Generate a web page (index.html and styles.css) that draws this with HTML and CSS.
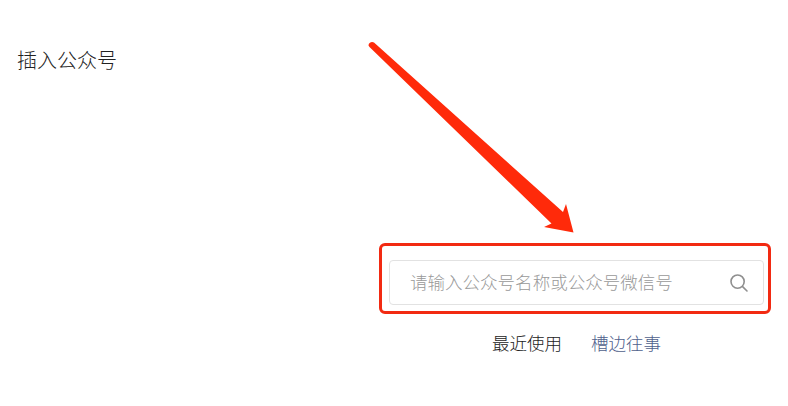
FILE: index.html
```html
<!DOCTYPE html>
<html lang="zh-CN">
<head>
    <meta charset="UTF-8">
    <meta name="viewport" content="width=device-width, initial-scale=1.0">
    <title>插入公众号</title>
    <link rel="stylesheet" href="styles.css">
</head>
<body>
    <h1 class="page-title">插入公众号</h1>

    <div class="search-section">
        <!-- Red outline around the search box -->
        <div class="highlight-box">
            <div class="search-box">
                <span class="search-placeholder">请输入公众号名称或公众号微信号</span>
                <svg class="search-icon" width="20" height="20" viewBox="0 0 20 20" fill="none" stroke="#8f8f8f" stroke-width="1.6" stroke-linecap="round">
                    <circle cx="8.6" cy="8.6" r="6.6"/>
                    <path d="M13.6 13.6L18 18"/>
                </svg>
            </div>
        </div>
        <div class="recent-row">
            <span class="recent-label">最近使用</span>
            <a class="recent-link" href="#">槽边往事</a>
        </div>
    </div>

    <!-- Annotation arrow -->
    <svg class="arrow" width="788" height="406" viewBox="0 0 788 406">
        <path fill="#ff2a0a" d="M368.500 45.500C368.500 42.500 372 41 374 42.500L563 212L566 204L573.500 232.500L544 227L551.500 223.500L369.500 47Z"/>
    </svg>
</body>
</html>
```

FILE: styles.css
```css
* {
    box-sizing: border-box;
}
body {
    margin: 0;
    height: 406px;
    overflow: hidden;
    background-color: #fff;
    font-family: "Noto Sans CJK SC", "Liberation Sans", sans-serif;
    font-weight: 300;
    color: #222;
}
.page-title {
    margin: 0;
    padding: 45px 0 0 17px;
    font-size: 20px;
    line-height: 30px;
    font-weight: 300;
}
.search-section {
    margin: 168px 17px 0 auto;
    width: 392px;
}
.highlight-box {
    height: 71px;
    padding: 14px 4px 6px 7px;
    border: 3px solid #f22a12;
    border-radius: 6px;
}
.search-box {
    display: flex;
    align-items: center;
    justify-content: space-between;
    height: 45px;
    padding: 0 14px 0 20px;
    border: 1px solid #e2e2e2;
    border-radius: 4px;
}
.search-placeholder {
    margin-bottom: 2px;
    font-size: 17.5px;
    letter-spacing: 0.02px;
    color: #999;
}
.recent-row {
    display: flex;
    justify-content: center;
    gap: 29px;
    margin-top: 14px;
    padding-left: 3px;
    font-size: 17.5px;
    line-height: 30px;
}
.recent-label {
    color: #222;
}
.recent-link {
    color: #4f5f8c;
    text-decoration: none;
}
.arrow {
    position: absolute;
    left: 0;
    top: 0;
    pointer-events: none;
}
```
